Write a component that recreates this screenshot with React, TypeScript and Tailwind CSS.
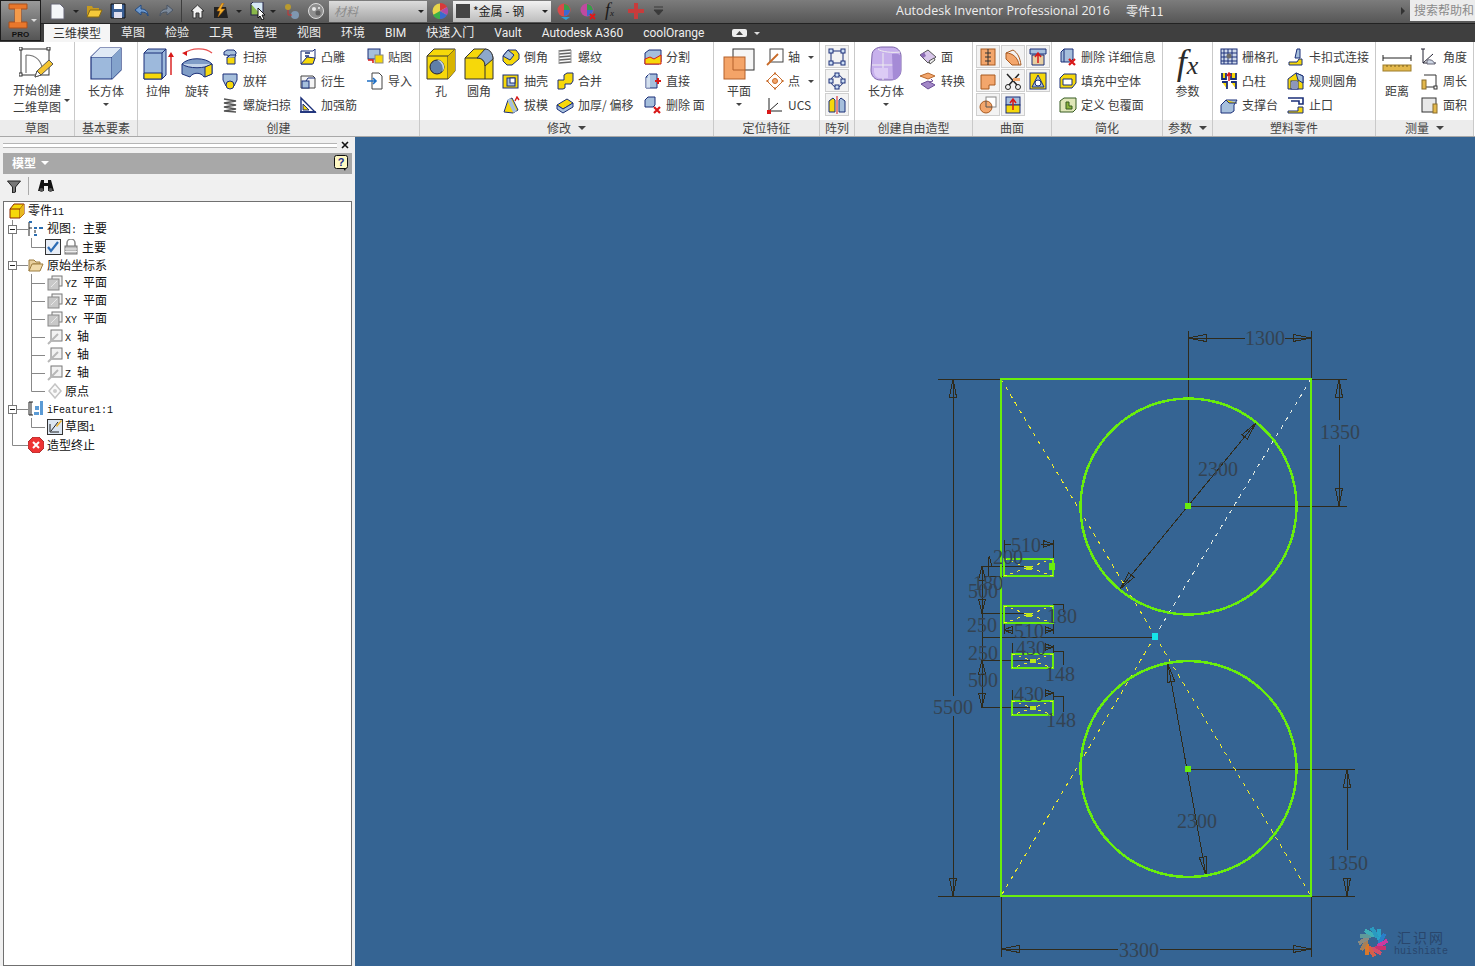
import React from "react";

const N = "#1b2f78";
const Y = "#f6d80a";
const B = "#a6bfdc";
const O = "#f3a66c";
const R = "#d81818";

// small 18px ribbon icons, one drawing per command
const small: Record<string, React.ReactNode> = {
  sweep: <><path d="M3 7V4l3-2h7l2 2v2l-2 2H8L6 7z" fill={B} stroke={N} /><path d="M6 9h8v7H6z" fill={Y} stroke={N} /><path d="M6 10l3-3h6l-1 2" fill={B} stroke={N} /></>,
  loft: <><path d="M2 2h14v6l-3 6H5L2 8z" fill={B} stroke={N} /><circle cx="9" cy="13" r="4" fill={Y} stroke={N} /></>,
  coil: <><path d="M3 3l12 2L3 7l12 2L3 11l12 2L3 15l12 1" fill="none" stroke="#555" strokeWidth="1.6" /></>,
  emboss: <><path d="M2 3h12l2-2v9l-3 6H2z" fill="#fff" stroke={N} /><path d="M2 16l6-7 8 1-2 6z" fill={Y} stroke={N} /><path d="M6 5h5M6 8h4" stroke={N} strokeWidth="1.6" /></>,
  derive: <><path d="M2 4h12l2 2v10H2z" fill="#f4f4f4" stroke="#444" /><rect x="3" y="9" width="7" height="7" fill={B} stroke={N} /><path d="M7 9l2-3h7" fill="none" stroke={N} /></>,
  rib: <><path d="M2 16V2l14 14z" fill="none" stroke={N} strokeWidth="1.4" /><path d="M4 14V8l6 6z" fill={Y} stroke={N} /><path d="M1 16h16" stroke={N} strokeWidth="1.6" /></>,
  decal: <><rect x="2" y="1" width="12" height="10" fill={B} stroke={N} /><rect x="9" y="7" width="8" height="8" fill={Y} stroke="#888" /><path d="M2 12h5v3" fill="none" stroke={R} strokeWidth="1.5" /></>,
  importf: <><path d="M6 1h7l3 3v13H6z" fill="#fff" stroke="#444" /><path d="M1 9h8M7 6l3 3-3 3" fill="none" stroke="#1f6fc4" strokeWidth="1.6" /></>,
  chamfer: <><path d="M1 8l5-6h8l3 4v5l-7 6H5L1 13z" fill={Y} stroke={N} /><path d="M1 8l5-6 6 5-4 5z" fill={B} stroke={N} /></>,
  shell: <><rect x="1" y="3" width="15" height="13" fill={Y} stroke={N} /><rect x="5" y="6" width="8" height="8" fill={B} stroke={N} /><rect x="8" y="6" width="5" height="5" fill="#fff" stroke={N} /></>,
  draft: <><path d="M2 16L6 4l4-2 6 12-5 3z" fill={Y} stroke={N} /><path d="M7 3l6 13" stroke={B} strokeWidth="4" /><path d="M13 5l2-4 2 3" fill="none" stroke={R} strokeWidth="1.4" /></>,
  thread: <><path d="M3 3l12-1M3 6l12-1M3 9l12-1M3 12l12-1M3 15l12-1" stroke="#666" strokeWidth="1.6" /><path d="M3 2v14M15 2v13" stroke="#999" /></>,
  combine: <><path d="M2 8h6V3l3-2h6v8l-2 3H9v4l-2 1H2z" fill={Y} stroke={N} /></>,
  thicken: <><path d="M1 9l10-6 6 4-10 6z" fill={Y} stroke={N} /><path d="M1 9v4l6 4 10-6V7l-10 6z" fill={B} stroke={N} /></>,
  split: <><path d="M1 5l4-3h12v12l-2 2H1z" fill={B} stroke={N} /><path d="M1 11l5-2 4 2 7-4v9H1z" fill={Y} stroke={R} /></>,
  direct: <><path d="M2 5l3-3h8v14H2z" fill={B} stroke={N} /><path d="M5 2v14M3 16V6" stroke="#fff" /><path d="M11 9h6M14 6v6" stroke={R} strokeWidth="2" /></>,
  delface: <><path d="M1 4l3-3h7v8l-2 2H1z" fill={B} stroke={N} /><path d="M10 11l6 6M16 11l-6 6" stroke={R} strokeWidth="2.2" /></>,
  axis: <><rect x="4" y="1" width="13" height="13" fill="#fff" stroke="#444" /><path d="M1 17L12 6" stroke="#c86a28" strokeWidth="1.8" /></>,
  point: <><path d="M9 1l8 8-8 8-8-8z" fill="#fff" stroke="#c86a28" /><circle cx="9" cy="9" r="2.5" fill={O} stroke="#c86a28" /><path d="M9 0v3M9 15v3M0 9h3M15 9h3" stroke="#c86a28" /></>,
  ucs: <><path d="M3 2v13h13M3 15l9-8" fill="none" stroke="#222" /><rect x="1" y="14" width="4" height="4" fill={R} /></>,
  face: <><path d="M1 7l8-5 8 7-8 6z" fill="#d8c6ea" stroke="#555" /><path d="M1 7l4-3 2 4-3 2z" fill="#8c6bb5" /><path d="M10 13l5-3 1 2-5 4z" fill="#eee" stroke="#555" /></>,
  convert: <><path d="M1 4l8-3 7 3-7 3z" fill={O} stroke="#b86a30" /><path d="M2 12l7-3 7 4-7 4z" fill="#a388c8" stroke="#6a4d96" /><path d="M12 7l2 2-4 1" fill="none" stroke="#6a4d96" /></>,
  simpdel: <><path d="M2 4l3-3h9v10l-3 3H2z" fill={B} stroke={N} /><path d="M5 1v13" stroke={N} /><path d="M10 11l6 6M16 11l-6 6" stroke={R} strokeWidth="2.2" /></>,
  fill: <><path d="M1 6l4-4h12v9l-4 5H1z" fill={Y} stroke={N} /><path d="M4 7h9v6H4z" fill="#fff" stroke={N} /></>,
  envelope: <><path d="M1 5l4-3h12v11l-3 3H1z" fill="#dfe6b8" stroke="#355a20" /><path d="M7 6v7h6v-3H10V6z" fill="#8ab33c" stroke="#355a20" /></>,
  grill: <><rect x="1" y="1" width="16" height="15" fill="#cfd9ea" stroke={N} /><path d="M4 1v15M8 1v15M12 1v15M1 5h16M1 9h16M1 13h16" stroke={N} /><circle cx="9" cy="8" r="2.5" fill="#6d6d6d" /></>,
  boss: <><path d="M2 1v6h4V1M11 1v6h5V1M2 10h5v7M11 10h5v7" fill={Y} stroke={N} strokeWidth="1.8" /><path d="M9 1v8M7 4l2-3 2 3" fill="none" stroke={R} strokeWidth="1.5" /></>,
  rest: <><path d="M1 9l5-5h11l-3 5v6l-3 2H1z" fill={B} stroke={N} /><path d="M6 4l3 3h8" fill={Y} stroke={N} /></>,
  snap: <><path d="M10 1h3v9h-5z" fill={B} stroke={N} /><path d="M2 14h8l2-3h3v6H2z" fill={Y} stroke={N} /></>,
  ruled: <><path d="M1 17V7l8-6 7 3v13z" fill={Y} stroke={N} /><path d="M9 1l7 3v7l-5-3z" fill={B} stroke={N} /><rect x="4" y="9" width="7" height="8" fill="#fff" stroke={N} /><path d="M5 11h5M5 13h5M5 15h5" stroke={N} /></>,
  lip: <><path d="M1 2h15v6h-4V5H4" fill="none" stroke={N} strokeWidth="1.6" /><path d="M1 15h10v-4h5v6H1z" fill={Y} stroke={N} /></>,
  angle: <><path d="M2 1v14h13" fill="none" stroke="#223" /><path d="M2 15L12 6" stroke="#223" /><path d="M6 12a7 7 0 0 1 8 4H6z" fill="#cfd8e6" stroke="#667" /><path d="M0 1h4" stroke="#223" /></>,
  perim: <><path d="M3 3h12v12H5" fill="none" stroke="#333" /><rect x="1" y="8" width="4" height="9" fill="#e3b84c" stroke="#8a6d2a" /><rect x="13" y="14" width="3" height="3" fill="#fff" stroke="#333" /></>,
  area: <><rect x="1" y="2" width="14" height="14" fill="#e8e8e8" stroke="#333" /><rect x="12" y="8" width="4" height="9" fill="#e3b84c" stroke="#8a6d2a" /></>,
};

const Caret = ({ cls = "border-t-[#444]" }: { cls?: string }) => (
  <span className={`block w-0 h-0 border-l-[3px] border-r-[3px] border-t-[3px] border-l-transparent border-r-transparent ${cls}`} />
);

const WideCaret = ({ cls = "border-t-[#444]" }: { cls?: string }) => (
  <span className={`block w-0 h-0 border-l-[4px] border-r-[4px] border-t-[4px] border-l-transparent border-r-transparent ${cls}`} />
);

const Small = ({ icon, text, caret }: { icon: string; text: string; caret?: boolean }) => (
  <div className="flex items-center h-[24px] whitespace-pre">
    <span className="w-[22px] shrink-0">
      <svg width="18" height="18" viewBox="0 0 18 18" className="block">{small[icon]}</svg>
    </span>
    <span>{text}</span>
    {caret && <span className="ml-[8px]"><Caret /></span>}
  </div>
);

const Big = ({ w, text, art, caret }: { w: string; text: string; art: React.ReactNode; caret?: boolean }) => (
  <div className={`${w} shrink-0 flex flex-col items-center`}>
    <div className="h-[38px] flex items-center justify-center">{art}</div>
    <span className="h-[16px]">{text}</span>
    {caret && <span className="mt-[4px]"><Caret /></span>}
  </div>
);

const Group = ({ w, label, caret, children }: { w: string; label: string; caret?: boolean; children: React.ReactNode }) => (
  <div className={`${w} shrink-0 flex flex-col border-r border-[#c9c9c9]`}>
    <div className="h-[78px] flex pt-[3px]">{children}</div>
    <div className="h-[16px] bg-[#ececec] flex items-center justify-center gap-[7px] text-[#444]">
      {label}
      {caret && <WideCaret />}
    </div>
  </div>
);

const Square = ({ children }: { children?: React.ReactNode }) => (
  <div className="w-[24px] h-[23px] border border-[#cfcfcf] bg-[#f3f3f3] flex items-center justify-center">
    {children && <svg width="18" height="18" viewBox="0 0 18 18">{children}</svg>}
  </div>
);

const cube = (
  <svg width="34" height="34" viewBox="0 0 34 34">
    <path d="M2 10L11 1h21v22l-9 9H2z" fill="#9db9dc" stroke={N} strokeWidth="1.2" />
    <path d="M2 10h21v22M23 10l9-9" fill="none" stroke={N} />
    <path d="M2 10L11 1h21l-9 9z" fill="#dfe9f5" />
    <path d="M23 10l9-9v22l-9 9z" fill="#84a3cc" />
  </svg>
);

const Tabs = ["草图", "检验", "工具", "管理", "视图", "环境", "BIM", "快速入门", "Vault", "Autodesk A360", "coolOrange"];

type Node = { level: 0 | 1 | 2; text: string; icon: string; box?: boolean; last?: boolean; end?: boolean; lock?: boolean };

const tree: Node[] = [
  { level: 0, text: "零件11", icon: "part" },
  { level: 1, text: "视图: 主要", icon: "view", box: true },
  { level: 2, text: "主要", icon: "check", last: true, lock: true },
  { level: 1, text: "原始坐标系", icon: "folder", box: true },
  { level: 2, text: "YZ 平面", icon: "plane" },
  { level: 2, text: "XZ 平面", icon: "plane" },
  { level: 2, text: "XY 平面", icon: "plane" },
  { level: 2, text: "X 轴", icon: "axis" },
  { level: 2, text: "Y 轴", icon: "axis" },
  { level: 2, text: "Z 轴", icon: "axis" },
  { level: 2, text: "原点", icon: "origin", last: true },
  { level: 1, text: "iFeature1:1", icon: "ifeat", box: true },
  { level: 2, text: "草图1", icon: "sketch", last: true },
  { level: 1, text: "造型终止", icon: "stop", end: true },
];

const treeIcons: Record<string, React.ReactNode> = {
  part: <><path d="M1 6l4-5h10v10l-4 4H1z" fill={Y} stroke="#8a2a00" /><path d="M1 6h10v9M11 6l4-5" fill="none" stroke="#8a2a00" /><path d="M11 6l4-5v10l-4 4z" fill="#e8b820" /></>,
  view: <><path d="M4 1H1v14M1 7h3" fill="none" stroke="#222" /><rect x="1" y="0" width="3" height="2" fill="#2a6db0" /><rect x="6" y="6" width="3" height="2" fill="#2a6db0" /><rect x="11" y="6" width="4" height="2" fill="#2a6db0" /><rect x="6" y="13" width="3" height="2" fill="#2a6db0" /><path d="M7 9v3" stroke="#222" /></>,
  check: <><rect x="0.5" y="0.5" width="15" height="15" fill="#e8eef7" stroke="#333" /><path d="M3 8l3 4 7-9" fill="none" stroke="#2d6cb5" strokeWidth="2.2" /></>,
  folder: <><path d="M1 14V3h5l2 2h4v2H5z" fill="#e8cf9e" stroke="#9c7c3e" /><path d="M1 14l3-7h11l-3 7z" fill="#f0d9a8" stroke="#9c7c3e" /></>,
  plane: <><rect x="5" y="1" width="10" height="10" fill="#f2f2f2" stroke="#777" /><rect x="1" y="4" width="11" height="11" fill="#c8c8c8" stroke="#888" /><path d="M4 12l6-6" stroke="#e8e8e8" /></>,
  axis: <><rect x="4" y="1" width="11" height="11" fill="#f2f2f2" stroke="#777" /><path d="M1 15L11 5" stroke="#b8b8b8" strokeWidth="2" /></>,
  origin: <><path d="M8 1l6 7-6 7-6-7z" fill="#fafafa" stroke="#c4c4c4" strokeWidth="1.5" /><circle cx="8" cy="8" r="2" fill="#ccc" /></>,
  ifeat: <><path d="M5 1H1v13h4M3 1v13" fill="none" stroke="#222" /><rect x="7" y="5" width="4" height="4" fill="#5b9bd5" /><rect x="12" y="0" width="3" height="14" fill="#5b9bd5" /><rect x="6" y="11" width="5" height="3" fill="#5b9bd5" /></>,
  sketch: <><rect x="0.5" y="0.5" width="15" height="15" fill="#dce6f2" stroke="#333" /><path d="M3 13V5M3 13h9M4 12l7-9" fill="none" stroke="#222" /><path d="M9 7l5-6 1 1-5 6z" fill="#f0b429" /></>,
  stop: <><path d="M5 0h6l5 5v6l-5 5H5l-5-5V5z" fill="#e33" stroke="#a33" /><path d="M5 5l6 6M11 5l-6 6" stroke="#fff" strokeWidth="2" /></>,
};

// SimSun style latin sits narrower than the CJK text
const Mixed = ({ text }: { text: string }) => (
  <span className="whitespace-pre">
    {text.split(/([\x00-\x7f]+)/).map((part, i) =>
      /^[\x00-\x7f]+$/.test(part) ? (
        <span key={i} className={`font-['Liberation_Mono'] text-[10px] ${i === 0 ? "ml-[1px]" : ""}`}>{part}</span>
      ) : (
        <span key={i}>{part}</span>
      )
    )}
  </span>
);

const TreeRow = ({ node, first }: { node: Node; first: boolean }) => {
  const gutter = node.level === 0 ? 5 : node.level === 1 ? 24 : node.lock ? 41 : 43;
  return (
    <div className="h-[18px] flex items-center text-[#111]">
      <svg width={gutter} height="18" className="shrink-0">
        {node.level > 0 && <path d={node.end ? "M8.5 0V9.5H24" : "M8.5 0V18"} stroke="#888" fill="none" />}
        {node.level === 1 && !node.end && <path d="M8.5 9.5H24" stroke="#888" />}
        {node.box && <g><rect x="4.5" y="5.5" width="8" height="8" fill="#fff" stroke="#777" /><path d="M6 9.5h5" stroke="#222" /></g>}
        {node.level === 2 && <path d={node.last ? "M27.5 0V9.5H41" : "M27.5 0V18M27.5 9.5H41"} stroke="#888" fill="none" />}
      </svg>
      <svg width="16" height="16" viewBox="0 0 16 16" className="shrink-0">{treeIcons[node.icon]}</svg>
      {node.lock && (
        <svg width="14" height="16" viewBox="0 0 14 16" className="ml-[3px] shrink-0">
          <path d="M3 7V4a4 4 0 0 1 8 0v3" fill="none" stroke="#888" strokeWidth="1.5" />
          <rect x="1" y="7" width="12" height="8" fill="#bbb" stroke="#777" />
          <path d="M1 10h12M1 12.500h12" stroke="#eee" />
        </svg>
      )}
      <span className={first || node.level === 1 ? "ml-[3px]" : node.lock ? "ml-[4px]" : "ml-[2px]"}><Mixed text={node.text} /></span>
    </div>
  );
};

const DIM = "#2f2b1c";
const TXT = "#344352";

const Arrow = ({ x, y, dx, dy, len = 18 }: { x: number; y: number; dx: number; dy: number; len?: number }) => {
  const px = -dy * 3.5;
  const py = dx * 3.5;
  const bx = x + dx * len;
  const by = y + dy * len;
  return <polygon points={`${x},${y} ${bx + px},${by + py} ${bx - px},${by - py}`} fill="none" stroke={DIM} />;
};

const lines: [number, number, number, number][] = [
  [1188, 331, 1188, 506], [1311, 331, 1311, 379], [1188, 338, 1245, 338], [1285, 338, 1311, 338],
  [1311, 379, 1347, 379], [1188, 506, 1347, 506], [1339, 379, 1339, 420], [1339, 445, 1339, 506],
  [938, 379, 1001, 379], [938, 896, 1001, 896], [953, 379, 953, 696], [953, 716, 953, 896],
  [1001, 896, 1001, 957], [1311, 896, 1311, 957], [1001, 949, 1118, 949], [1160, 949, 1311, 949],
  [1188, 769, 1355, 769], [1311, 896, 1355, 896], [1347, 769, 1347, 850], [1347, 878, 1347, 896],
  [1256, 423, 1120, 589], [1168, 664, 1206, 875],
  [981, 566, 1027, 566], [985, 576, 1004, 576], [981, 613, 1027, 613], [982, 637, 1155, 637],
  [982, 660, 1032, 660], [981, 707, 1032, 707], [982, 566, 982, 707],
  [1004, 540, 1004, 559], [1053, 540, 1053, 559], [1004, 544, 1011, 544], [1041, 544, 1053, 544],
  [1004, 623, 1004, 634], [1053, 623, 1053, 634], [1004, 630, 1012, 630], [1046, 630, 1053, 630],
  [1012, 643, 1012, 654], [1053, 645, 1053, 654], [1046, 647, 1053, 647],
  [1012, 690, 1012, 701], [1053, 692, 1053, 701], [1046, 693, 1053, 693],
  [1053, 604, 1063, 604], [1063, 604, 1063, 612], [1053, 651, 1063, 651], [1063, 651, 1063, 665],
  [1053, 696, 1063, 696], [1063, 696, 1063, 712], [988, 557, 988, 576], [989, 556, 992, 566],
];

const dims: [string, number, number][] = [
  ["1300", 1265, 345], ["1350", 1340, 439], ["5500", 953, 714], ["3300", 1139, 957], ["1350", 1348, 870],
  ["2300", 1218, 476], ["2300", 1197, 828], ["510", 1026, 552], ["200", 1008, 564], ["180", 988, 590],
  ["500", 983, 598], ["180", 1062, 623], ["510", 1029, 638], ["250", 982, 632], ["430", 1031, 655],
  ["250", 983, 660], ["148", 1060, 681], ["500", 983, 687], ["430", 1029, 701], ["148", 1061, 727],
];

const slots: [number, number, number, number][] = [
  [1004, 559, 49, 17], [1004, 606, 49, 17], [1012, 654, 41, 14], [1012, 701, 41, 14],
];

const petals = ["#2aa3c9", "#2a7fc9", "#c93aa0", "#c9326e", "#d0506a", "#d4604a", "#d9782a", "#a5805a", "#8a8a80", "#5f9a9a", "#3fb0b8", "#2a9ac0"];

export default function App() {
  return (
    <div className="w-[1475px] h-[966px] overflow-hidden flex flex-col bg-[#f0f0f0] font-['Noto_Sans_CJK_SC','Noto_Sans',sans-serif] text-[12px] leading-[16px] text-[#3d3d3d]">
      {/* title bar and tab strip */}
      <div className="flex h-[42px] shrink-0 bg-[#3f3f3f]">
        <div className="w-[41px] h-[41px] shrink-0 border border-[#1d1d1d] bg-gradient-to-b from-[#9a9a9a] to-[#555] flex flex-col items-center relative">
          <svg width="22" height="27" viewBox="0 0 22 27" className="mr-[6px] mt-[2px]">
            <path d="M2 1h18v5h-6v13h6v6H2v-6h6V6H2z" fill="#e9772b" stroke="#a9501c" />
            <path d="M8 6v13h6V6z" fill="#f49a4a" />
          </svg>
          <span className="text-[8px] leading-[9px] text-[#111] font-bold font-['Liberation_Sans']">PRO</span>
          <span className="absolute right-[3px] top-[18px]"><Caret cls="border-t-[#ddd]" /></span>
        </div>
        <div className="flex-1 flex flex-col min-w-0">
          <div className="h-[24px] flex items-center pl-[9px] pb-[1px] bg-gradient-to-b from-[#7c7c7c] to-[#565656] border-b border-[#222]">
            <svg width="15" height="17" viewBox="0 0 15 17" className="shrink-0"><path d="M1 1h9l4 4v11H1z" fill="#f4f6fa" stroke="#667" /></svg>
            <span className="ml-[8px]"><Caret cls="border-t-[#222]" /></span>
            <svg width="17" height="14" viewBox="0 0 17 14" className="ml-[7px] shrink-0"><path d="M1 2h5l1 2h6v2H4L1 12z" fill="#c79a1e" /><path d="M1 13l3-7h12l-3 7z" fill="#f5c93a" stroke="#8a6a10" /></svg>
            <svg width="16" height="16" viewBox="0 0 16 16" className="ml-[7px] shrink-0"><path d="M1 1h14v14H1z" fill="#3a5f94" stroke="#111" /><rect x="4" y="1" width="8" height="5" fill="#fff" /><rect x="4" y="9" width="8" height="6" fill="#dde" /></svg>
            <svg width="16" height="14" viewBox="0 0 16 14" className="ml-[8px] shrink-0"><path d="M7 1L1 6l6 5V8c4 0 6 1 7 4 0-5-3-7-7-7z" fill="#6e9bd0" stroke="#244a80" /></svg>
            <svg width="16" height="14" viewBox="0 0 16 14" className="ml-[8px] shrink-0"><path d="M9 1l6 5-6 5V8C5 8 3 9 2 12c0-5 3-7 7-7z" fill="#7d8b9c" stroke="#4a5564" /></svg>
            <span className="ml-[7px] w-px h-[22px] bg-[#3d3d3d] shrink-0" />
            <svg width="15" height="15" viewBox="0 0 15 15" className="ml-[8px] shrink-0"><path d="M7.500 1L1 7h2v7h3V9h3v5h3V7h2z" fill="#f2f2f2" stroke="#333" /></svg>
            <svg width="16" height="16" viewBox="0 0 16 16" className="ml-[8px] shrink-0"><path d="M1 4h12l2 11H1z" fill="#222" /><path d="M9 0L4 8h3l-2 6 7-8H8l3-6z" fill="#f5b22a" stroke="#a15c10" strokeWidth="0.6" /></svg>
            <span className="ml-[7px]"><Caret cls="border-t-[#222]" /></span>
            <svg width="16" height="18" viewBox="0 0 16 18" className="ml-[8px] shrink-0"><rect x="1" y="2" width="10" height="11" fill="#8ab84a" stroke="#224" /><path d="M1 2l2-2h10v10l-2 3" fill="#d6e8f5" stroke="#224" /><path d="M8 6l7 7-3 0 2 4-2 1-2-4-2 2z" fill="#fff" stroke="#111" /></svg>
            <span className="ml-[4px]"><Caret cls="border-t-[#222]" /></span>
            <svg width="16" height="16" viewBox="0 0 16 16" className="ml-[8px] shrink-0"><circle cx="4" cy="4" r="3" fill="#b99a2e" /><circle cx="11" cy="12" r="4" fill="#7f97b0" /><path d="M4 7v5h4" fill="none" stroke="#c33" /></svg>
            <svg width="16" height="16" viewBox="0 0 16 16" className="ml-[8px] shrink-0"><circle cx="8" cy="8" r="7.500" fill="#8e8e8e" stroke="#ddd" /><circle cx="6" cy="6" r="2" fill="#e8e8e8" /><circle cx="10" cy="10" r="2.500" fill="#5e5e5e" /><circle cx="11" cy="5" r="1" fill="#eee" /></svg>
            <div className="ml-[5px] w-[98px] h-[21px] shrink-0 bg-gradient-to-b from-[#dcdcdc] to-[#a5a5a5] flex items-center justify-between pl-[5px] pr-[3px]">
              <span className="italic text-[#8c8c8c]">材料</span>
              <Caret cls="border-t-[#222]" />
            </div>
            <svg width="16" height="16" viewBox="0 0 16 16" className="ml-[5px] shrink-0"><circle cx="8" cy="8" r="7.500" fill="#e8d44a" /><path d="M8 8L8 0a8 8 0 0 1 7 4z" fill="#d83a3a" /><path d="M8 8l7-4a8 8 0 0 1 0 8z" fill="#b04aa8" /><path d="M8 8l7 4a8 8 0 0 1-7 4z" fill="#3a6ad0" /><path d="M8 8v8a8 8 0 0 1-7-4z" fill="#3ab04a" /></svg>
            <div className="ml-[5px] w-[98px] h-[21px] shrink-0 bg-gradient-to-b from-[#f2f2f2] to-[#bdbdbd] flex items-center pl-[3px] pr-[3px] text-[#222]">
              <span className="w-[14px] h-[14px] bg-[#444] shrink-0" />
              <span className="ml-[3px] whitespace-pre">*金属 - 钢</span>
              <span className="ml-auto"><Caret cls="border-t-[#222]" /></span>
            </div>
            <svg width="16" height="17" viewBox="0 0 16 17" className="ml-[5px] shrink-0"><circle cx="8" cy="7" r="6.500" fill="#d84a4a" /><path d="M8 7V1a6 6 0 0 1 6 6z" fill="#3a9a4a" /><path d="M8 7h6a6 6 0 0 1-6 6z" fill="#3a6ad0" /><path d="M5 14h9l-4 3z" fill="#2aa0d8" /></svg>
            <svg width="16" height="17" viewBox="0 0 16 17" className="ml-[8px] shrink-0"><circle cx="7" cy="7" r="6.500" fill="#c04aa0" /><path d="M7 7V1a6 6 0 0 1 6 6z" fill="#3a9a4a" /><path d="M7 7h6a6 6 0 0 1-6 6z" fill="#3a6ad0" /><path d="M10 11l5 5M15 11l-5 5" stroke="#e01818" strokeWidth="2" /></svg>
            <span className="ml-[9px] w-[16px] shrink-0 font-['Liberation_Serif'] italic text-[18px] leading-[18px] text-[#1a1a1a]">f<span className="text-[9px]">x</span></span>
            <svg width="16" height="16" viewBox="0 0 16 16" className="ml-[7px] shrink-0"><path d="M6 0h4v6h6v4h-6v6H6v-6H0V6h6z" fill="#c83c3c" /></svg>
            <svg width="11" height="10" viewBox="0 0 11 10" className="ml-[9px] shrink-0"><path d="M1 1h9M1 4h9l-4.500 5z" fill="#3a3a3a" stroke="#3a3a3a" /></svg>
            <span className="ml-[232px] whitespace-nowrap font-['Open_Sans'] text-[12.500px] text-[#eeeeee]">Autodesk Inventor Professional 2016</span>
            <span className="ml-[16px] whitespace-nowrap text-[#eeeeee]">零件11</span>
            <span className="ml-auto block w-0 h-0 border-t-[4px] border-b-[4px] border-l-[4px] border-t-transparent border-b-transparent border-l-[#333]" />
            <div className="ml-[5px] w-[65px] h-[22px] -mt-[2px] bg-[#ececec] text-[#8a8a8a] pl-[4px] flex items-center whitespace-nowrap">搜索帮助和</div>
          </div>
          <div className="h-[18px] flex items-center text-[#eeeeee]">
            <div className="ml-[3px] w-[66px] h-[18px] bg-[#f5f5f5] text-[#333] flex items-center justify-center">三维模型</div>
            <div className="ml-[11px] flex items-center gap-[20px]">
              {Tabs.map((t) => (
                <span key={t} className="whitespace-nowrap font-['Roboto','Noto_Sans_CJK_SC',sans-serif]">{t}</span>
              ))}
            </div>
            <div className="ml-[28px] flex items-center gap-[7px]">
              <svg width="15" height="8" viewBox="0 0 15 8"><rect width="15" height="8" rx="2" fill="#eee" /><path d="M4 6l3.500-4L11 6z" fill="#444" /></svg>
              <Caret cls="border-t-[#ddd]" />
            </div>
          </div>
        </div>
      </div>

      {/* ribbon */}
      <div className="h-[95px] shrink-0 flex bg-white border-b border-[#a8a8a8]">
        <Group w="w-[75px]" label="草图">
          <div className="w-[74px] flex flex-col items-center relative">
            <svg width="36" height="34" viewBox="0 0 36 34" className="mt-[2px]">
              <rect x="2" y="2" width="28" height="26" fill="none" stroke="#333" />
              <path d="M7 8v18M7 8c11 0 16 7 17 17" fill="none" stroke="#777" strokeWidth="1.2" />
              <rect x="0" y="0" width="3" height="3" fill="#fff" stroke="#333" /><rect x="28" y="0" width="3" height="3" fill="#fff" stroke="#333" /><rect x="0" y="26" width="3" height="3" fill="#fff" stroke="#333" />
              <path d="M16 30l2-6L30 13l4 4-12 11z" fill="#f4c430" stroke="#555" />
              <path d="M16 30l2-6 4 4z" fill="#fff" stroke="#555" />
            </svg>
            <span className="leading-[17px]">开始创建</span>
            <span className="leading-[17px]">二维草图</span>
            <span className="absolute left-[64px] top-[54px]"><Caret /></span>
          </div>
        </Group>
        <Group w="w-[63px]" label="基本要素">
          <Big w="w-[62px]" text="长方体" caret art={cube} />
        </Group>
        <Group w="w-[282px]" label="创建">
          <Big w="w-[40px]" text="拉伸" art={
            <svg width="32" height="34" viewBox="0 0 32 34">
              <path d="M2 6l4-4h18v26l-4 4H2z" fill="#9db9dc" stroke={N} />
              <path d="M2 26h18v6H2z" fill={Y} stroke={N} />
              <path d="M20 6v26M2 6h18l4-4" fill="none" stroke={N} />
              <path d="M29 28V8" stroke={R} strokeWidth="1.4" />
              <path d="M26 10l3-5 3 5z" fill={R} />
            </svg>
          } />
          <Big w="w-[38px]" text="旋转" art={
            <svg width="32" height="34" viewBox="0 0 32 34">
              <path d="M4 6C10 1 24 0 31 6" fill="none" stroke="#e85050" strokeWidth="1.3" />
              <path d="M1 6l5-2 0 5z" fill={R} />
              <path d="M1 17c6-7 24-7 30 0v10l-8 3c-3-5-11-5-14 0l-8-3z" fill="#7f9cc6" stroke={N} />
              <path d="M1 17c6 5 24 5 30 0" fill="#c3d3e8" stroke={N} />
              <path d="M24 20l7-3v10l-7 3z" fill={Y} stroke={N} />
            </svg>
          } />
          <div className="ml-[5px] w-[78px]"><Small icon="sweep" text="扫掠" /><Small icon="loft" text="放样" /><Small icon="coil" text="螺旋扫掠" /></div>
          <div className="w-[67px]"><Small icon="emboss" text="凸雕" /><Small icon="derive" text="衍生" /><Small icon="rib" text="加强筋" /></div>
          <div><Small icon="decal" text="贴图" /><Small icon="importf" text="导入" /></div>
        </Group>
        <Group w="w-[294px]" label="修改" caret>
          <Big w="w-[42px]" text="孔" art={
            <svg width="30" height="32" viewBox="0 0 30 32">
              <path d="M1 8l7-7h21v22l-7 8H1z" fill={Y} stroke="#333" />
              <path d="M1 8h21v23M22 8l7-7" fill="none" stroke="#333" />
              <path d="M22 8l7-7v22l-7 8z" fill="#d8b400" />
              <circle cx="11" cy="19" r="7" fill="#5f7fa8" stroke="#223" />
              <path d="M11 12a7 7 0 0 1 5 12 9 9 0 0 0-5-12z" fill="#c8d6e8" />
            </svg>
          } />
          <Big w="w-[34px]" text="圆角" art={
            <svg width="30" height="32" viewBox="0 0 30 32">
              <path d="M1 10l9-9h10c5 0 9 5 9 10v20H1z" fill={Y} stroke="#333" />
              <path d="M1 10h12c5 0 8 3 8 8v13" fill="none" stroke="#333" />
              <path d="M13 10l8-9c5 0 8 5 8 10l-8 7c0-5-3-8-8-8z" fill="#8da8cc" stroke="#333" />
            </svg>
          } />
          <div className="ml-[6px] w-[54px]"><Small icon="chamfer" text="倒角" /><Small icon="shell" text="抽壳" /><Small icon="draft" text="拔模" /></div>
          <div className="w-[88px]"><Small icon="thread" text="螺纹" /><Small icon="combine" text="合并" /><Small icon="thicken" text="加厚/ 偏移" /></div>
          <div><Small icon="split" text="分割" /><Small icon="direct" text="直接" /><Small icon="delface" text="删除 面" /></div>
        </Group>
        <Group w="w-[106px]" label="定位特征">
          <Big w="w-[50px]" text="平面" caret art={
            <svg width="32" height="32" viewBox="0 0 32 32">
              <rect x="10" y="1" width="21" height="21" fill="#f6f6f6" stroke="#333" />
              <rect x="1" y="9" width="21" height="22" fill="#f4a468" stroke="#b4612a" />
              <path d="M10 9v13h12" fill="none" stroke="#b4612a" />
            </svg>
          } />
          <div className="ml-[2px]"><Small icon="axis" text="轴" caret /><Small icon="point" text="点" caret /><Small icon="ucs" text="UCS" /></div>
        </Group>
        <Group w="w-[35px]" label="阵列">
          <div className="ml-[5px] flex flex-col gap-[1px]">
            <Square><path d="M3 3h12v12H3z" fill="none" stroke={N} /><rect x="1" y="1" width="4" height="4" fill="#cfe0f5" stroke={N} /><rect x="13" y="1" width="4" height="4" fill="#cfe0f5" stroke={N} /><rect x="1" y="13" width="4" height="4" fill="#cfe0f5" stroke={N} /><rect x="13" y="13" width="4" height="4" fill="#cfe0f5" stroke={N} /></Square>
            <Square><circle cx="9" cy="9" r="6" fill="none" stroke={N} /><rect x="7" y="1" width="4" height="4" fill="#cfe0f5" stroke={N} /><rect x="1" y="7" width="4" height="4" fill="#cfe0f5" stroke={N} /><rect x="13" y="7" width="4" height="4" fill="#cfe0f5" stroke={N} /><rect x="7" y="13" width="4" height="4" fill="#cfe0f5" stroke={N} /></Square>
            <Square><path d="M1 5l4-3 2 2v12H1z" fill={Y} stroke={N} /><path d="M9 0v18" stroke={R} /><path d="M13 2l-2 2v12h6V5z" fill={B} stroke={N} /></Square>
          </div>
        </Group>
        <Group w="w-[118px]" label="创建自由造型">
          <Big w="w-[62px]" text="长方体" caret art={
            <svg width="32" height="36" viewBox="0 0 32 36">
              <path d="M2 9c0-5 5-8 10-8h10c5 0 9 4 9 9v14c0 6-5 10-10 10H10c-5 0-9-4-9-10z" fill="#c7b0ec" stroke="#7b63a8" />
              <path d="M2 19h24M13 7v27M8 3c3 3 15 4 22 3" fill="none" stroke="#eee" />
              <path d="M22 8c5-1 9 0 9 4v12c0 6-4 10-8 10z" fill="#a58bd6" />
              <path d="M4 22h14v10H9c-3 0-5-4-5-7z" fill="#dccbf5" />
            </svg>
          } />
          <div className="ml-[2px]"><Small icon="face" text="面" /><Small icon="convert" text="转换" /></div>
        </Group>
        <Group w="w-[79px]" label="曲面">
          <div className="ml-[3px] grid grid-cols-[24px_24px_24px] gap-[1px] h-[71px]">
            <Square><rect x="2" y="1" width="14" height="16" fill={O} stroke="#a85a20" /><path d="M9 1v16M6 5h6M6 9h6M6 13h6" stroke="#333" /></Square>
            <Square><path d="M2 5c7 0 12 5 13 12H8L2 11z" fill={O} stroke="#a85a20" /><path d="M2 5l7-3c5 3 7 8 8 15h-2" fill="none" stroke="#a85a20" /></Square>
            <Square><path d="M3 7h12v10H3z" fill="#e8cfa0" stroke={N} /><path d="M1 1h16v5H1z" fill={B} stroke={N} /><path d="M9 15V6M6 9l3-4 3 4" fill="none" stroke={R} strokeWidth="1.5" /></Square>
            <Square><path d="M2 3h14v10h-6v4H2z" fill={O} stroke="#a85a20" /></Square>
            <Square><path d="M3 2l10 11M15 2L5 13" stroke="#222" strokeWidth="1.5" /><circle cx="4" cy="15" r="2.500" fill="none" stroke="#222" /><circle cx="14" cy="15" r="2.500" fill="none" stroke="#222" /><rect x="9" y="6" width="7" height="3" fill={O} /></Square>
            <Square><rect x="1" y="1" width="16" height="16" fill={Y} stroke={N} /><path d="M9 3l6 12H3z" fill={B} stroke={N} /><circle cx="9" cy="11" r="3" fill="#fff" stroke={N} /></Square>
            <Square><rect x="7" y="1" width="10" height="10" fill="#fff" stroke="#888" /><circle cx="7" cy="11" r="6" fill={O} stroke="#a85a20" /><path d="M7 5v6h6" fill="none" stroke="#555" /></Square>
            <Square><rect x="2" y="1" width="14" height="8" fill={B} stroke={N} /><rect x="2" y="9" width="14" height="8" fill={Y} stroke={N} /><path d="M9 14V4M6 7l3-4 3 4" fill="none" stroke={R} strokeWidth="1.5" /></Square>
          </div>
        </Group>
        <Group w="w-[111px]" label="简化">
          <div className="ml-[7px]"><Small icon="simpdel" text="删除 详细信息" /><Small icon="fill" text="填充中空体" /><Small icon="envelope" text="定义 包覆面" /></div>
        </Group>
        <Group w="w-[50px]" label="参数" caret>
          <Big w="w-[49px]" text="参数" art={<span className="font-['Liberation_Serif'] italic text-[36px] leading-[36px] text-[#2b2b2b]">f<span className="text-[26px]">x</span></span>} />
        </Group>
        <Group w="w-[163px]" label="塑料零件">
          <div className="ml-[7px] w-[67px]"><Small icon="grill" text="栅格孔" /><Small icon="boss" text="凸柱" /><Small icon="rest" text="支撑台" /></div>
          <div><Small icon="snap" text="卡扣式连接" /><Small icon="ruled" text="规则圆角" /><Small icon="lip" text="止口" /></div>
        </Group>
        <Group w="w-[98px]" label="测量" caret>
          <Big w="w-[42px]" text="距离" art={
            <svg width="30" height="20" viewBox="0 0 30 20">
              <path d="M1 1v6M29 1v6M1 4h28" stroke="#222" fill="none" />
              <rect x="1" y="11" width="28" height="6" fill="#e3b84c" stroke="#9c7c2a" />
              <path d="M5 11v2M9 11v2M13 11v2M17 11v2M21 11v2M25 11v2" stroke="#7a5f1c" />
            </svg>
          } />
          <div className="ml-[3px]"><Small icon="angle" text="角度" /><Small icon="perim" text="周长" /><Small icon="area" text="面积" /></div>
        </Group>
      </div>

      {/* browser pane and graphics window */}
      <div className="flex-1 flex min-h-0">
        <div className="w-[355px] shrink-0 flex flex-col pl-[3px] pr-[3px] pt-[5px]">
          <div className="flex items-center h-[6px] shrink-0">
            <div className="w-[334px] h-[5px] border-t border-b border-[#b5b5b5] bg-white" />
            <svg width="8" height="8" viewBox="0 0 8 8" className="ml-[4px]"><path d="M1 1l6 6M7 1l-6 6" stroke="#111" strokeWidth="1.6" /></svg>
          </div>
          <div className="mt-[5px] h-[21px] shrink-0 bg-[#a8a8a8] flex items-center pl-[9px] pr-[4px] pb-[1px] text-white font-bold">
            <span>模型</span>
            <span className="ml-[5px]"><WideCaret cls="border-t-[#fff]" /></span>
            <svg width="14" height="16" viewBox="0 0 14 16" className="ml-auto"><rect x="0.500" y="0.500" width="13" height="13" rx="2" fill="#fff9c4" stroke="#111" /><path d="M9 13l2 3 1-3z" fill="#111" /><text x="7" y="11" textAnchor="middle" fontSize="11" fontWeight="bold" fill="#1a2a8a" fontFamily="Liberation Sans">?</text></svg>
          </div>
          <div className="h-[27px] shrink-0 flex items-center pl-[4px] pb-[3px]">
            <svg width="14" height="13" viewBox="0 0 14 13"><path d="M0.500 1h13L8.500 7v5l-3 1V7z" fill="#777" stroke="#222" /></svg>
            <span className="ml-[7px] w-px h-[18px] bg-[#aaa]" />
            <svg width="16" height="14" viewBox="0 0 16 14" className="ml-[9px]"><path d="M3 1h3v3h4V1h3l3 11h-6V7H6v5H0z" fill="#111" /><circle cx="3.500" cy="11" r="2" fill="#555" /><circle cx="12.500" cy="11" r="2" fill="#555" /></svg>
          </div>
          <div className="flex-1 bg-white border border-[#707070] min-h-0">
            {tree.map((n, i) => (
              <TreeRow key={i} node={n} first={i === 0} />
            ))}
          </div>
        </div>
        <div className="flex-1 bg-[#356493] min-w-0">
          <svg width="1120" height="829" viewBox="355 137 1120 829" className="block" shapeRendering="crispEdges">
            {lines.map(([a, b, c, d], i) => (
              <line key={i} x1={a} y1={b} x2={c} y2={d} stroke={DIM} strokeWidth="1" />
            ))}
            <Arrow x={1188} y={338} dx={1} dy={0} /><Arrow x={1311} y={338} dx={-1} dy={0} />
            <Arrow x={1339} y={379} dx={0} dy={1} /><Arrow x={1339} y={506} dx={0} dy={-1} />
            <Arrow x={953} y={379} dx={0} dy={1} /><Arrow x={953} y={896} dx={0} dy={-1} />
            <Arrow x={1001} y={949} dx={1} dy={0} /><Arrow x={1311} y={949} dx={-1} dy={0} />
            <Arrow x={1347} y={769} dx={0} dy={1} /><Arrow x={1347} y={896} dx={0} dy={-1} />
            <Arrow x={1256} y={423} dx={-0.634} dy={0.773} /><Arrow x={1120} y={589} dx={0.634} dy={-0.773} />
            <Arrow x={1168} y={664} dx={0.177} dy={0.984} /><Arrow x={1206} y={875} dx={-0.177} dy={-0.984} />
            <Arrow x={982} y={566} dx={0} dy={1} len={14} /><Arrow x={982} y={613} dx={0} dy={-1} len={14} />
            <Arrow x={982} y={660} dx={0} dy={1} len={14} /><Arrow x={982} y={707} dx={0} dy={-1} len={14} />
            <Arrow x={1053} y={544} dx={-1} dy={0} len={10} /><Arrow x={1004} y={630} dx={1} dy={0} len={8} />
            <Arrow x={1053} y={630} dx={-1} dy={0} len={8} /><Arrow x={1053} y={647} dx={-1} dy={0} len={8} />
            <Arrow x={1053} y={693} dx={-1} dy={0} len={8} />

            <g fill="none" strokeWidth="1" strokeDasharray="4 5">
              <line x1="1001" y1="379" x2="1155" y2="636" stroke="#f2ee2a" />
              <line x1="1311" y1="379" x2="1155" y2="636" stroke="#dfe8e0" />
              <line x1="1155" y1="636" x2="1311" y2="896" stroke="#f2ee2a" />
              <line x1="1155" y1="636" x2="1001" y2="896" stroke="#f2ee2a" />
            </g>
            <g fill="none" stroke="#69ee0c" strokeWidth="2">
              <rect x="1001" y="379" width="310" height="517" />
            </g>
            <g fill="none" stroke="#69ee0c" strokeWidth="2.500">
              <circle cx="1188.500" cy="506.500" r="108" />
              <circle cx="1188.500" cy="769" r="108" />
            </g>
            {slots.map(([x, y, w, h], i) => (
              <g key={i}>
                <rect x={x} y={y} width={w} height={h} fill="none" stroke="#69ee0c" strokeWidth="2" />
                <path d={`M${x} ${y}L${x + w} ${y + h}M${x + w} ${y}L${x} ${y + h}`} stroke="#f2ee2a" strokeDasharray="3 4" fill="none" />
                <rect x={x + w / 2 - 3} y={y + h / 2 - 2} width="6" height="4" fill="#b9e81a" />
              </g>
            ))}
            <rect x="1049" y="563" width="6" height="7" fill="#69ee0c" />
            <rect x="1185" y="503" width="6" height="6" fill="#69ee0c" />
            <rect x="1185" y="766" width="6" height="6" fill="#69ee0c" />
            <rect x="1152" y="633" width="6" height="7" fill="#16e4e8" />

            {dims.map(([t, x, y], i) => (
              <text key={i} x={x} y={y} textAnchor="middle" fontSize="20" fontFamily="Liberation Serif" fill={TXT}>{t}</text>
            ))}

            {/* watermark */}
            {petals.map((c, i) => (
              <rect key={i} x="1377" y="929" width="4" height="11" fill={c} transform={`rotate(${i * 30} 1373 942)`} />
            ))}
            <text x="1397" y="943" fontSize="14" letterSpacing="2" fontFamily="Noto Sans CJK SC" fill="#29466c">汇识网</text>
            <text x="1394" y="954" fontSize="10" fontFamily="Liberation Mono" fill="#29466c">huishiate</text>
          </svg>
        </div>
      </div>
    </div>
  );
}
